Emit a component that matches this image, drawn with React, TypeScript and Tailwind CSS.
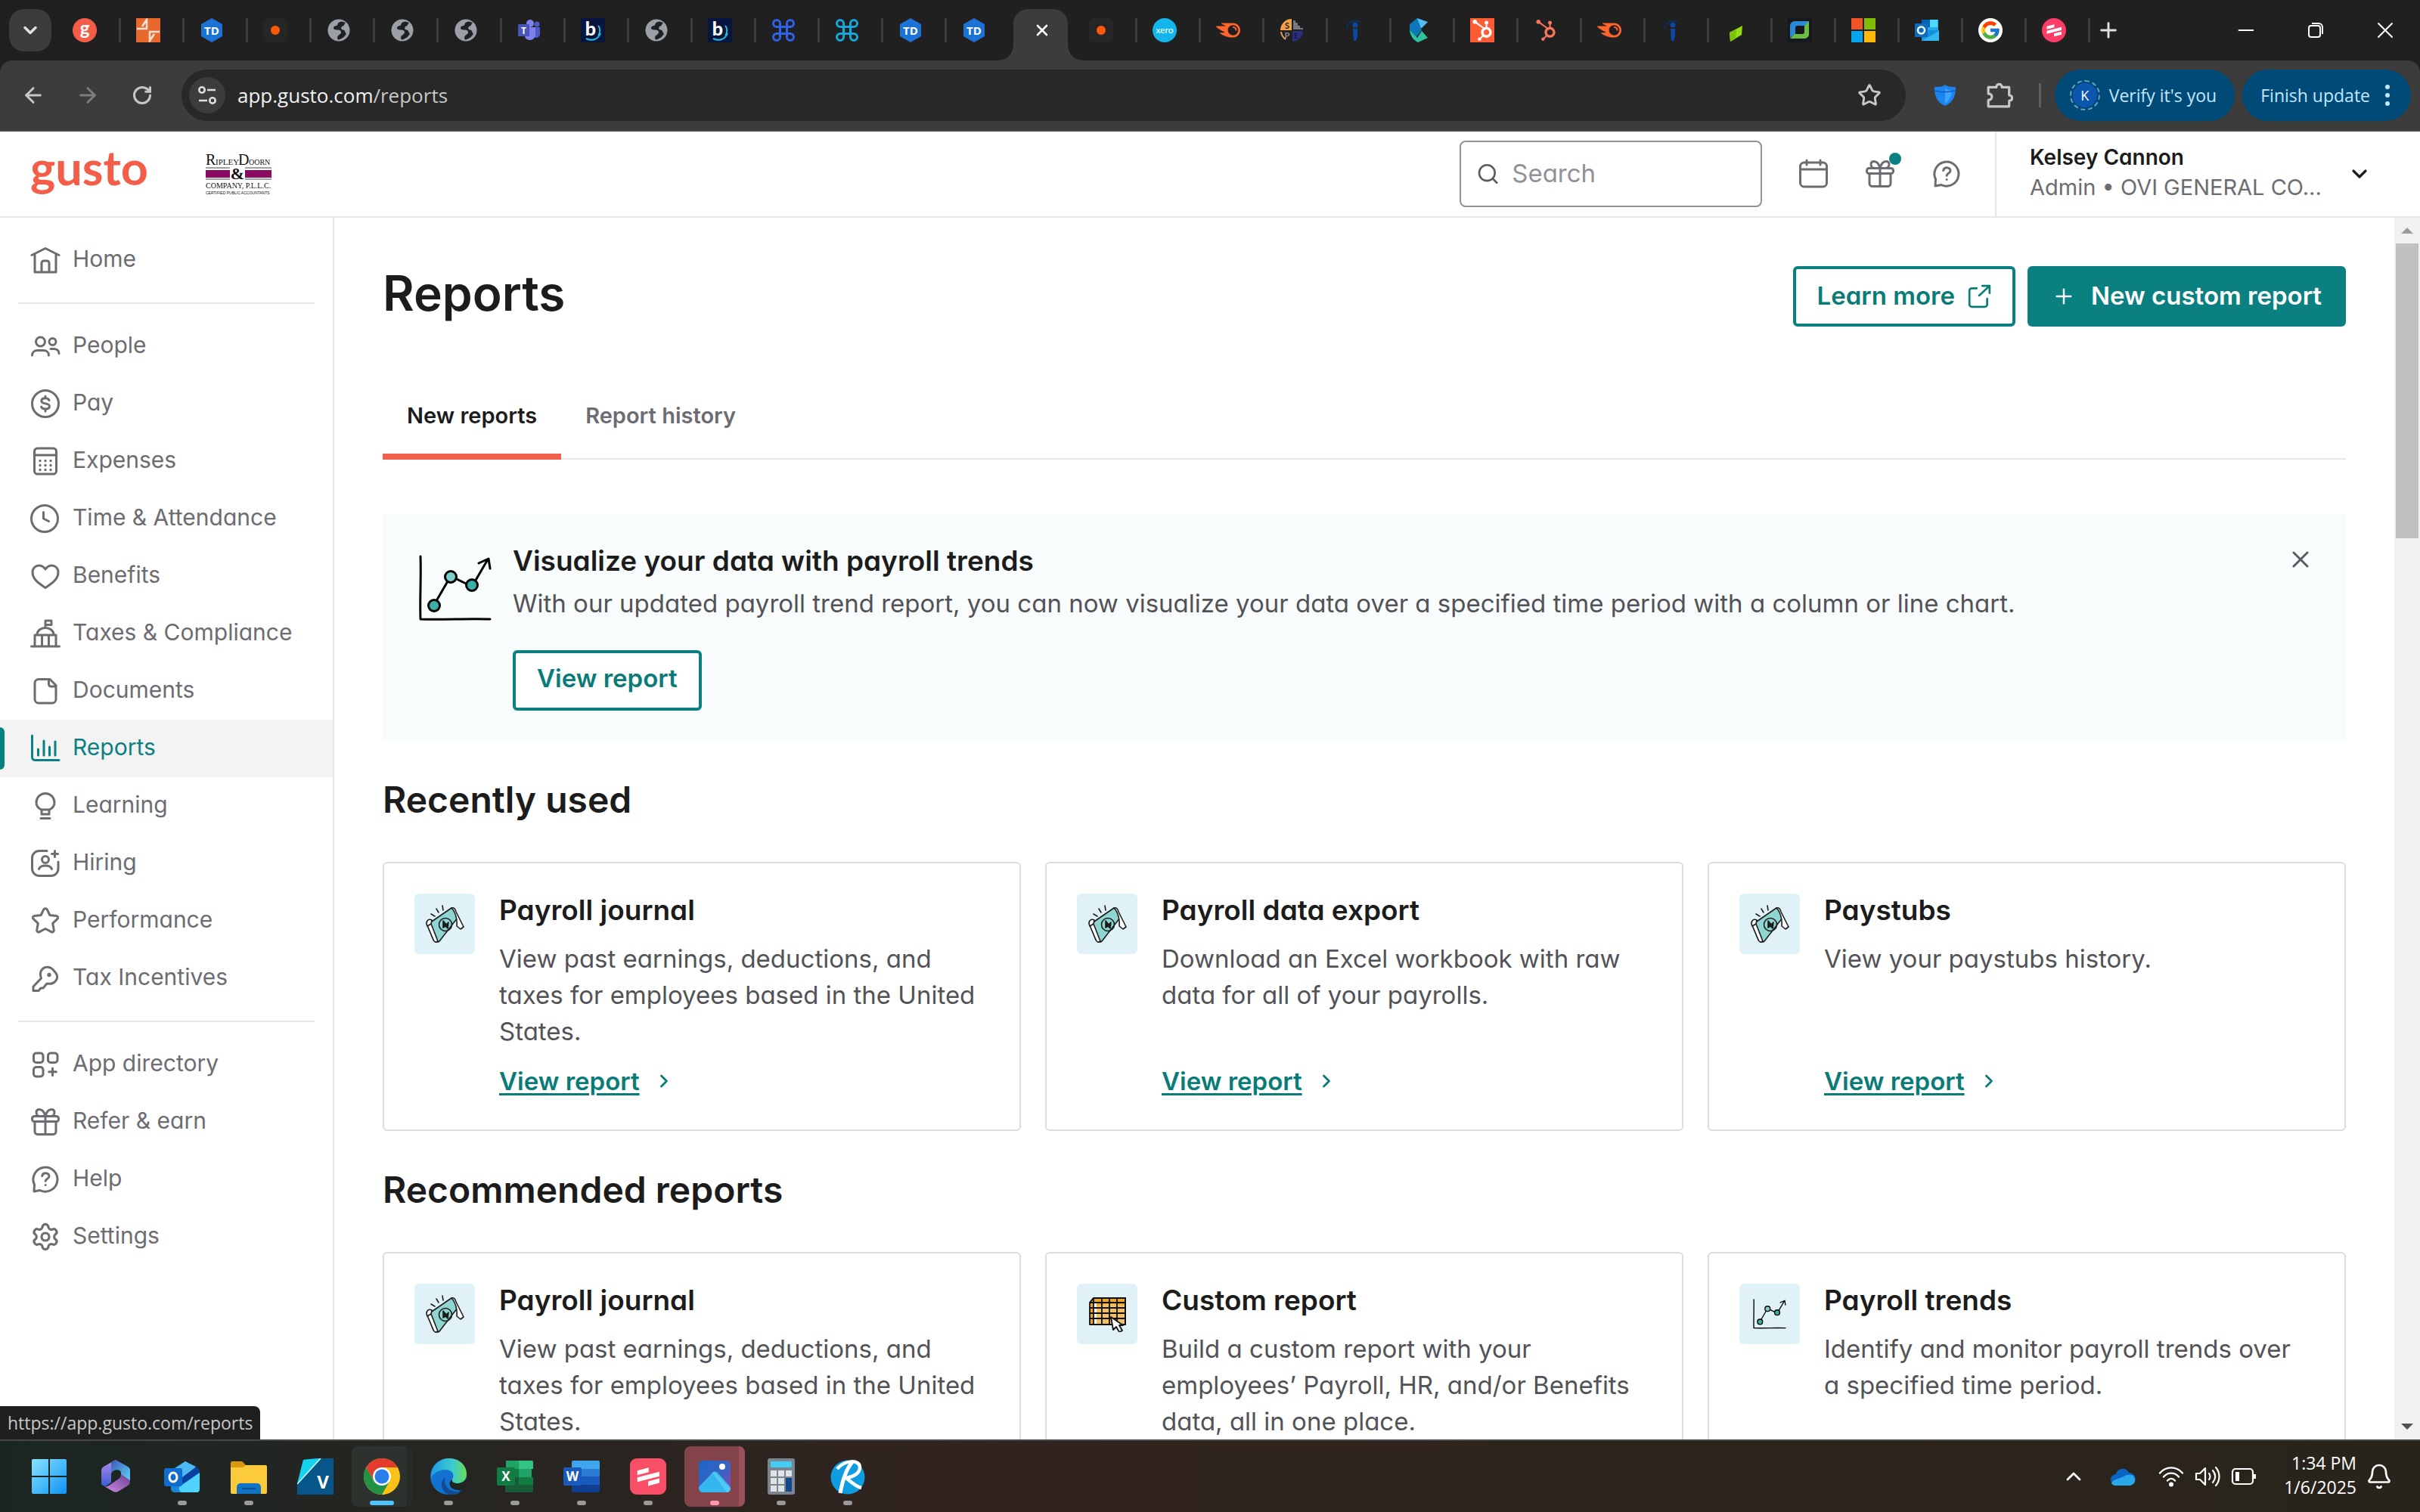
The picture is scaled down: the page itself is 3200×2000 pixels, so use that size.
import React from 'react';
import {
  ArrowLeft,
  ArrowRight,
  Bell,
  ChevronDown,
  ChevronRight,
  ChevronUp,
  Command,
  Minus,
  Plus,
  RotateCw,
  Search,
  Settings,
  Star,
  X,
} from 'lucide-react';
import { FaHubspot } from 'react-icons/fa';
import { FcGoogle } from 'react-icons/fc';
import { SiSemrush } from 'react-icons/si';
import { clsx } from 'clsx';

/* ---------- tab favicons ---------- */

function GustoFavicon() {
  return (
    <svg viewBox="0 0 32 32" className="size-8 overflow-visible">
      <circle cx="16" cy="16" r="16" fill="#f45d48" />
      <text x="16" y="22" textAnchor="middle" fontSize="24" fontWeight="700" fontFamily="Lato, sans-serif" fill="#fff">g</text>
    </svg>
  );
}

function ArrowsFavicon() {
  return (
    <svg viewBox="0 0 32 32" className="size-8">
      <rect width="32" height="32" fill="#e8692d" />
      <path d="M1 14h13V2L8 11M31 18H18v12l6-9" fill="none" stroke="#fbe3d5" strokeWidth="2.500" />
    </svg>
  );
}

function TdFavicon() {
  return (
    <svg viewBox="0 0 32 32" className="size-8">
      <path d="m16 0 14 8v16l-14 8-14-8V8z" fill="#1a73d4" />
      <text x="16" y="21.500" textAnchor="middle" fontSize="15" fontWeight="700" fontFamily="Open Sans, sans-serif" fill="#fff">TD</text>
    </svg>
  );
}

function DotFavicon() {
  return (
    <svg viewBox="0 0 32 32" className="size-8">
      <rect width="32" height="32" rx="6" fill="#262626" />
      <circle cx="16" cy="16" r="6" fill="#fc5a08" />
    </svg>
  );
}

function GlobeFavicon() {
  return (
    <svg viewBox="0 0 32 32" className="size-8">
      <circle cx="16" cy="16" r="14.500" fill="#9aa0a6" />
      <path
        d="M19 4.500c-3 1-5 2-5 5-2 1-4 .5-5 3 0 3 3 3 6 3 3 .5 4 1 4 4-2 3-5 3-5 7l1 2c5-.5 9-4 11-8-2-1-1-4-4-5-3 0-4-3-1-5 3-.5 2-4 4-4-1-1-3-2-6-2z"
        fill="#202124"
      />
    </svg>
  );
}

function TeamsFavicon() {
  return (
    <svg viewBox="0 0 32 32" className="size-8">
      <circle cx="17" cy="7" r="5" fill="#7b83eb" />
      <circle cx="26" cy="8" r="3.500" fill="#5059c9" />
      <path d="M22 12h8v9a5 5 0 0 1-8 4z" fill="#5059c9" />
      <path d="M10 12h14v11a7.500 7.500 0 0 1-14 2z" fill="#7b83eb" />
      <rect x="1" y="8" width="15" height="16" rx="1.500" fill="#4b53bc" />
      <text x="8.500" y="20.500" textAnchor="middle" fontSize="12" fontWeight="700" fontFamily="Open Sans, sans-serif" fill="#fff">T</text>
    </svg>
  );
}

function BFavicon() {
  return (
    <svg viewBox="0 0 32 32" className="size-8 overflow-visible">
      <rect width="32" height="32" fill="#06163f" />
      <path d="M7 27c8 4 16 1 19-7M23 10c3 3 3 9 0 13" fill="none" stroke="#28bcd8" strokeWidth="2" />
      <text x="13" y="23" textAnchor="middle" fontSize="25" fontWeight="900" fontFamily="Lato, sans-serif" fill="#fff">b</text>
    </svg>
  );
}

function XeroFavicon() {
  return (
    <svg viewBox="0 0 32 32" className="size-8">
      <circle cx="16" cy="16" r="16" fill="#13b5ea" />
      <text x="16" y="20" textAnchor="middle" fontSize="12" fontFamily="Lato, sans-serif" fill="#fff">xero</text>
    </svg>
  );
}

function SpeFavicon() {
  return (
    <svg viewBox="0 0 32 32" className="size-8">
      <path d="M16 1A15 15 0 0 0 1 16h15z" fill="#f0a04b" />
      <path d="M2 18a14 14 0 0 0 6 10" fill="none" stroke="#f0a04b" strokeWidth="2" />
      <path d="M18 15V3h3v3h3v4h3v3h4v2z" fill="#77787c" />
      <path d="M17 17h14a15 15 0 0 1-14 14z" fill="#2c2f80" />
      <text x="10" y="14" textAnchor="middle" fontSize="11" fontWeight="700" fontFamily="Lato, sans-serif" fill="#202020">S</text>
      <text x="10" y="27" textAnchor="middle" fontSize="11" fontWeight="700" fontFamily="Lato, sans-serif" fill="#8d8e92">P</text>
      <text x="22" y="27" textAnchor="middle" fontSize="10" fontWeight="700" fontFamily="Lato, sans-serif" fill="#15163f">E</text>
    </svg>
  );
}

function InfoFavicon() {
  return (
    <svg viewBox="0 0 32 32" className="size-8">
      <path d="M5 14c1-8 8-13 18-9" fill="none" stroke="#0d2f6b" strokeWidth="1.500" />
      <circle cx="16" cy="9" r="3.500" fill="#0b47a6" />
      <path d="M13 14h6v10l-2 6h-3z" fill="#0b47a6" />
    </svg>
  );
}

function FoldFavicon() {
  return (
    <svg viewBox="0 0 32 32" className="size-8">
      <path d="M14 0 28 5l-8 8-10 2z" fill="#54bdf0" />
      <path d="m14 0-10 8v10l8 8 8-10z" fill="#0d76b8" />
      <path d="M4 16c1 8 5 13 11 16l13-6-8-9-6 9z" fill="#2cc29c" />
    </svg>
  );
}

function HubspotTile() {
  return (
    <span className="flex size-8 items-center justify-center bg-[#ff5c35]">
      <FaHubspot className="size-7 text-white" />
    </span>
  );
}

function LeafFavicon() {
  return (
    <svg viewBox="0 0 32 32" className="size-8">
      <path d="m7 19 17-9-1 12-15 9z" fill="#96dc10" />
      <path d="m7 19 9-4-1 12-7 4z" fill="#7cc40a" />
    </svg>
  );
}

function RingFavicon() {
  return (
    <svg viewBox="0 0 32 32" className="size-8">
      <rect width="32" height="32" fill="#161a1e" />
      <path d="M3 26V11c0-5 3-7 7-7h18l-4 6H13c-2 0-3 1-3 3v8z" fill="#2b8ad6" />
      <path d="M28 4v17c0 4-3 6-7 6H3l6-6h10c2 0 3-1 3-3v-8z" fill="#6dbb45" />
    </svg>
  );
}

function MicrosoftFavicon() {
  return (
    <svg viewBox="0 0 32 32" className="size-8">
      <path d="M0 0h15v15H0z" fill="#f35325" />
      <path d="M17 0h15v15H17z" fill="#81bc06" />
      <path d="M0 17h15v15H0z" fill="#05a6f0" />
      <path d="M17 17h15v15H17z" fill="#ffba08" />
    </svg>
  );
}

function OutlookFavicon() {
  return (
    <svg viewBox="0 0 32 32" className="size-8">
      <path d="M9 2h22v14H9z" fill="#28a8ea" />
      <path d="M9 2h11v10H9z" fill="#0364b8" />
      <path d="M20 2h10v10H20z" fill="#50d9ff" />
      <path d="M9 16h23v14H9z" fill="#1490df" />
      <path d="m9 30 23-13v13z" fill="#35b8f1" />
      <rect y="7" width="17" height="18" rx="1.500" fill="#0f6cbd" />
      <circle cx="8.500" cy="16" r="4.500" fill="none" stroke="#fff" strokeWidth="2.500" />
    </svg>
  );
}

function GoogleFavicon() {
  return (
    <span className="flex size-8 items-center justify-center rounded-full bg-white">
      <FcGoogle className="size-7" />
    </span>
  );
}

function BarsFavicon() {
  return (
    <svg viewBox="0 0 32 32" className="size-8">
      <circle cx="16" cy="16" r="16" fill="#fb3c66" />
      <BarsGlyph />
    </svg>
  );
}

function BarsGlyph() {
  return (
    <g fill="#fff">
      <path d="m6.500 10.800 10-2.600v4l-10 2.600z" />
      <path d="M6.500 16.800 26 11.800v4L6.500 20.800z" />
      <path d="m16 20.300 10-2.600v4l-10 2.600z" />
    </g>
  );
}

/* ---------- sidebar icons, all on a 40 unit grid ---------- */

function Glyph({ children }: { children: React.ReactNode }) {
  return (
    <svg
      viewBox="0 0 40 40"
      className="size-10 shrink-0"
      fill="none"
      stroke="currentColor"
      strokeWidth="3"
      strokeLinecap="round"
      strokeLinejoin="round"
    >
      {children}
    </svg>
  );
}

const HomeIcon = () => (
  <Glyph>
    <path d="M2 13.500 20 4.500l18 9M6 12v24h28V12M15 36V24a3 3 0 0 1 3-3h4a3 3 0 0 1 3 3v12" />
  </Glyph>
);

const PeopleIcon = () => (
  <Glyph>
    <circle cx="13.500" cy="14" r="6" />
    <circle cx="29.500" cy="14" r="4.500" />
    <path d="M2.500 32c0-4 3-6.500 7-6.500h8c4 0 7 2.500 7 6.500M27 23.500h4c4 0 7 2 7 6" />
  </Glyph>
);

const PayIcon = () => (
  <Glyph>
    <circle cx="20" cy="20" r="17.500" />
    <path d="M25 15.500c-.8-2-2.800-2.700-5-2.700-3 0-5.200 1.200-5.200 3.500 0 5.200 10.600 2 10.600 7 0 2.600-2.600 3.800-5.400 3.800-2.600 0-4.700-1-5.400-3M20 10v2.500M20 27.500V30" />
  </Glyph>
);

const ExpensesIcon = () => (
  <Glyph>
    <rect x="5.500" y="3" width="29" height="34" rx="4" />
    <path d="M5.500 12h29" />
    <path d="M13 19.500h.01M20 19.500h.01M27 19.500h.01M13 25.500h.01M20 25.500h.01M27 25.500h.01M13 31.500h.01M20 31.500h.01M27 31.500h.01" strokeWidth="3.500" />
  </Glyph>
);

const ClockIcon = () => (
  <Glyph>
    <circle cx="19" cy="20" r="17.500" />
    <path d="M17.500 11.500v8.500l7 3.500" />
  </Glyph>
);

const HeartIcon = () => (
  <Glyph>
    <path d="M20 35.500C12 30 3 24.500 3 15c0-5.500 4-9 8.500-9 3.500 0 6.500 2 8.500 5 2-3 5-5 8.500-5C33 6 37 9.500 37 15c0 9.500-9 15-17 20.500z" />
  </Glyph>
);

const TaxesIcon = () => (
  <Glyph>
    <path d="M1.500 37h37M6 37V22h28v15M15.500 22v15M24.500 22v15M9 22c0-6 5-9.500 11-9.500S31 16 31 22M20 12V3h8v5.500h-8" />
  </Glyph>
);

const DocumentIcon = () => (
  <Glyph>
    <path d="M26 4.500H11a5 5 0 0 0-5 5V31a5 5 0 0 0 5 5h18a5 5 0 0 0 5-5V12.500zM24.500 5v6a3 3 0 0 0 3 3H34" />
  </Glyph>
);

const ReportsIcon = () => (
  <Glyph>
    <path d="M2.500 3v28.500a4 4 0 0 0 4 4H38M10.500 21v8M18 10v19M25.500 18v11M33 11v18" />
  </Glyph>
);

const BulbIcon = () => (
  <Glyph>
    <path d="M14.500 25c-4-2-6.500-5-6.500-9.500a12 12 0 0 1 24 0c0 4.500-2.500 7.500-6.500 9.500zM15 25v6h10v-6M14 36.500h12" />
  </Glyph>
);

const HiringIcon = () => (
  <Glyph>
    <path d="M22 3.500H12A9.500 9.500 0 0 0 2.500 13v14a9.500 9.500 0 0 0 9.500 9.500h15.500A9.500 9.500 0 0 0 37 27v-9M32.500 3.500v8M28.500 7.500h8M11.500 27.500c1-3 4-4.500 8.500-4.500s7.500 1.500 8.500 4.500" />
    <circle cx="20" cy="15" r="4.500" />
  </Glyph>
);

const PerformanceIcon = () => (
  <Glyph>
    <path d="M17.600 5.200a2.700 2.700 0 0 1 4.800 0l3.400 7.300 8.800 1.100a2.200 2.200 0 0 1 1.300 3.800l-6.200 6 1.600 8.800a2.300 2.300 0 0 1-3.400 2.400L20 30.500l-7.900 4.100a2.300 2.300 0 0 1-3.400-2.400l1.600-8.800-6.200-6a2.200 2.200 0 0 1 1.300-3.800l8.800-1.100z" />
  </Glyph>
);

const KeyIcon = () => (
  <Glyph>
    <path d="M14.500 20 4 31v5.500h7l3-3.500h3l5-6c5 1 9 0 12-4 2.500-3.500 2-7.500-1-11l-3.500-4c-3-3-9-4-12.500-1s-4.500 8-2.500 13z" />
    <circle cx="25" cy="15.500" r="1.200" />
  </Glyph>
);

const AppsIcon = () => (
  <Glyph>
    <rect x="4.500" y="5" width="12.500" height="12.500" rx="3.500" />
    <rect x="23.500" y="5" width="12.500" height="12.500" rx="3.500" />
    <rect x="4.500" y="23.500" width="12.500" height="12.500" rx="3.500" />
    <path d="M29.500 25v9.500M24.700 29.800h9.600" />
  </Glyph>
);

const GiftIcon = () => (
  <Glyph>
    <rect x="2.500" y="12.500" width="35" height="7" rx="3" />
    <path d="M6 19.500v13a4 4 0 0 0 4 4h20a4 4 0 0 0 4-4v-13M20 12.500v24M20 12.500c-1.500-6-4.500-9-8-9-2.500 0-4 1.500-4 4 0 3 2 5 5 5M20 12.500c1.500-6 4.500-9 8-9 2.500 0 4 1.500 4 4 0 3-2 5-5 5" />
  </Glyph>
);

const HelpIcon = () => (
  <Glyph>
    <path d="M5 36l.5-9A16 16 0 1 1 13 34.500z" />
    <path d="M15.700 15.500c.5-2.500 2.300-3.800 4.500-3.800 2.800 0 4.800 1.800 4.800 4.200 0 3.300-4.800 3.300-4.800 6.300M20.200 27.500h.01" />
  </Glyph>
);

const CalendarIcon = () => (
  <Glyph>
    <rect x="2.500" y="5" width="35" height="32" rx="5" />
    <path d="M2.500 14h35M11 2v6M29 2v6" />
  </Glyph>
);

const SettingsIcon = () => <Settings className="size-10 shrink-0" strokeWidth={1.9} />;

/* ---------- report illustrations ---------- */

function TrendArt({ className }: { className: string }) {
  return (
    <svg viewBox="0 0 96 88" className={className} fill="none" stroke="#000" strokeWidth="3" strokeLinecap="round" strokeLinejoin="round">
      <path d="M2 2c1 28-1 56 0 83 30 1 62-1 92 0" />
      <path d="m20 66 22-38 28 14L91 6M79 11l13-6 2 13" />
      <circle cx="20" cy="67" r="7.500" fill="#3bb0a6" />
      <circle cx="42" cy="29" r="7.500" fill="#7cd0ca" />
      <circle cx="70" cy="40" r="7.500" fill="#3bb0a6" />
    </svg>
  );
}

function CashArt() {
  return (
    <svg viewBox="0 0 52 52" className="size-13" fill="none" stroke="#1c1c1c" strokeWidth="1.600" strokeLinejoin="round" strokeLinecap="round">
      <path d="M3 27 35 5c4 1 6 7 8 13L19 49c-3 2-6 1-8-2z" fill="#8fd6d2" />
      <path d="m3 28 5-2 9 23c-3 2-5 1-6-2z" fill="#fff" />
      <path d="M2 26c0-5 3-7 7-5l-1 5-5 3z" fill="#fff" />
      <path d="M35 5c3-1 5 1 6 5l10 20-4 3-5-4c1-9-2-19-7-24z" fill="#fff" />
      <circle cx="27" cy="27" r="8.500" />
      <path d="m24 22 4 5 3-3-1 8-3-3-3 2z" fill="#1c1c1c" />
      <path d="m18 11-3-5M24 8l-1-6M13 16l-5-3" />
    </svg>
  );
}

function TableArt() {
  return (
    <svg viewBox="0 0 52 48" className="h-12 w-13" stroke="#111" strokeWidth="1.800" strokeLinejoin="round">
      <path d="M3 9 8 3h42v35H3z" fill="#e9a62c" />
      <path d="M12 14c12-5 26-3 37-1v24H12z" fill="#f2c069" stroke="none" />
      <path d="M8 10h4v27H8z" fill="#fff" stroke="none" />
      <path d="M3 9 8 3v35M3 9h47M3 16h47M3 23h47M3 30h47M3 38h47V3H8M19 3v35M29 3v35M39 3v35" fill="none" />
      <path d="m31 28 3 17 4-4 4 7 4-2-4-7h5z" fill="#fff" />
    </svg>
  );
}

/* ---------- taskbar icons ---------- */

function StartLogo() {
  return (
    <svg viewBox="0 0 48 48" className="size-12">
      <defs>
        <linearGradient id="start" x1="0" y1="0" x2="1" y2="1">
          <stop offset="0" stopColor="#8be3ff" />
          <stop offset="1" stopColor="#0d93f5" />
        </linearGradient>
      </defs>
      <path d="M3 1h20v22H1V3a2 2 0 0 1 2-2zM25 1h20a2 2 0 0 1 2 2v20H25zM1 25h22v22H3a2 2 0 0 1-2-2zM25 25h22v20a2 2 0 0 1-2 2H25z" fill="url(#start)" />
    </svg>
  );
}

function CopilotLogo() {
  return (
    <svg viewBox="0 0 48 48" className="size-12">
      <defs>
        <linearGradient id="m365a" x1="0" y1="0" x2="0" y2="1">
          <stop offset="0" stopColor="#b48be8" />
          <stop offset="1" stopColor="#3b5fd9" />
        </linearGradient>
        <linearGradient id="m365b" x1="0" y1="0" x2="1" y2="1">
          <stop offset="0" stopColor="#3c57b5" />
          <stop offset="1" stopColor="#5fd6fb" />
        </linearGradient>
        <linearGradient id="m365c" x1="0" y1="1" x2="1" y2="0">
          <stop offset="0" stopColor="#d08bea" />
          <stop offset="1" stopColor="#6a3f8e" />
        </linearGradient>
      </defs>
      <path d="M24 2 8 11c-2 1-3 3-3 5v17c0 2 4 5 7 3l6-4V19c0-3 1-5 3-6l6-5z" fill="url(#m365a)" />
      <path d="m24 2 16 9c2 1 3 3 3 5v14L31 22v-3c0-4-9-6-13 1V5z" fill="url(#m365b)" />
      <path d="M43 29c0 4-1 6-3 7l-13 8c-2 1-4 1-6 0L9 37c4 1 6-1 9-3l10-7c2-1 3-3 3-6z" fill="url(#m365c)" />
    </svg>
  );
}

function OutlookLogo() {
  return (
    <svg viewBox="0 0 48 48" className="size-12">
      <path d="M28 4 46 16v24c0 3-2 5-5 5H14c-3 0-5-2-5-5V16z" fill="#1a86d8" />
      <path d="M28 4 10 16v6l12 6L42 11z" fill="#4cb9f1" />
      <path d="m24 25 19-14 4 5v3L24 34z" fill="#0b3f9e" />
      <path d="m47 19-27 19c-1 4 1 7 4 7h19c3 0 4-2 4-5z" fill="#4fd3fa" />
      <rect y="13" width="24" height="24" rx="3" fill="#0f6cd0" />
      <ellipse cx="12" cy="25" rx="5" ry="6" fill="none" stroke="#fff" strokeWidth="3" />
    </svg>
  );
}

function FolderLogo() {
  return (
    <svg viewBox="0 0 48 48" className="size-12">
      <path d="M2 4h13l5 5v6H0V6a2 2 0 0 1 2-2z" fill="#d99a0b" />
      <path d="M0 12h16l4-3h26a2 2 0 0 1 2 2v34a2 2 0 0 1-2 2H2a2 2 0 0 1-2-2z" fill="#fccb3b" />
      <path d="M8 47V38a5 5 0 0 1 5-5h22a5 5 0 0 1 5 5v9z" fill="#1173c4" />
      <path d="M15 40h18" stroke="#0a4f8e" strokeWidth="2" />
    </svg>
  );
}

function VLogo() {
  return (
    <svg viewBox="0 0 48 48" className="size-12">
      <path d="M8 2C20 0 34 0 48 0v48H0V32z" fill="#07568a" />
      <path d="M8 2C16 1 24 0 31 0L0 34z" fill="#15d2ee" />
      <path d="M31 0 0 34" stroke="#d9fbff" strokeWidth="1.500" />
      <text x="34" y="40" textAnchor="middle" fontSize="24" fontWeight="700" fontFamily="Open Sans, sans-serif" fill="#fff">V</text>
    </svg>
  );
}

function ChromeLogo() {
  return (
    <svg viewBox="0 0 48 48" className="size-12">
      <circle cx="24" cy="24" r="24" fill="#fbc116" />
      <path d="M3.200 12A24 24 0 0 1 44.800 12H24L13.600 30z" fill="#e33b2e" />
      <path d="M3.200 12A24 24 0 0 0 24 48L34.400 30 24 36 13.600 30z" fill="#229342" />
      <circle cx="24" cy="24" r="12" fill="#fff" />
      <circle cx="24" cy="24" r="9.500" fill="#2b7de9" />
    </svg>
  );
}

function EdgeLogo() {
  return (
    <svg viewBox="0 0 48 48" className="size-12">
      <defs>
        <linearGradient id="edge" x1="0" y1="0" x2="1" y2="0">
          <stop offset="0" stopColor="#1f9be0" />
          <stop offset=".6" stopColor="#3ccbd0" />
          <stop offset="1" stopColor="#6bdc55" />
        </linearGradient>
      </defs>
      <circle cx="24" cy="24" r="24" fill="#1173cf" />
      <path d="M1 20C4 7 14 0 25 0c14 0 23 10 23 20 0 8-5 13-12 13-5 0-8-2-7-5 4-6 0-13-9-13C10 15 4 20 1 26z" fill="url(#edge)" />
      <path d="M20 24c-4 10 4 20 15 20 4 0 6-1 9-3-5 6-12 8-20 7-8-4-14-14-4-24z" fill="#134a94" />
      <path d="M29 28c-1 3 2 5 7 5 5 0 9-2 12-7 0 7-2 11-4 14-3 2-8 3-13 1-6-3-8-10-2-13z" fill="#1f2421" />
    </svg>
  );
}

function ExcelLogo() {
  return (
    <svg viewBox="0 0 48 48" className="size-12">
      <path d="M12 3h34v42H12z" fill="#21a366" />
      <path d="M29 3h17a2 2 0 0 1 2 2v9H29z" fill="#33c481" />
      <path d="M11 14h18v11H11zM29 25h19v10H29z" fill="#107c41" />
      <path d="M11 25h18v10H11zM11 35h37v8a2 2 0 0 1-2 2H13a2 2 0 0 1-2-2z" fill="#185c37" />
      <rect y="12" width="24" height="24" rx="2" fill="#107c41" />
      <text x="12" y="30" textAnchor="middle" fontSize="17" fontWeight="700" fontFamily="Open Sans, sans-serif" fill="#fff">X</text>
    </svg>
  );
}

function WordLogo() {
  return (
    <svg viewBox="0 0 48 48" className="size-12">
      <path d="M11 5a2 2 0 0 1 2-2h33a2 2 0 0 1 2 2v9H11z" fill="#41a5ee" />
      <path d="M11 14h37v10H11z" fill="#2b7cd3" />
      <path d="M11 24h37v11H11z" fill="#185abd" />
      <path d="M11 35h37v8a2 2 0 0 1-2 2H13a2 2 0 0 1-2-2z" fill="#103f91" />
      <rect y="12" width="24" height="24" rx="2" fill="#185abd" />
      <text x="12" y="30" textAnchor="middle" fontSize="17" fontWeight="700" fontFamily="Open Sans, sans-serif" fill="#fff">W</text>
    </svg>
  );
}

function BarsLogo() {
  return (
    <svg viewBox="0 0 32 32" className="size-12">
      <rect width="32" height="32" rx="6" fill="#f94f66" />
      <BarsGlyph />
    </svg>
  );
}

function PhotosLogo() {
  return (
    <svg viewBox="0 0 48 48" className="size-12">
      <defs>
        <linearGradient id="photos" x1="0" y1="0" x2="1" y2="1">
          <stop offset="0" stopColor="#1a66c9" />
          <stop offset=".6" stopColor="#3c62c0" />
          <stop offset="1" stopColor="#a03bb0" />
        </linearGradient>
      </defs>
      <rect x="3" y="3" width="42" height="42" rx="5" fill="url(#photos)" />
      <path d="M3 38 21 19c2-2 5-2 7 0l17 19c0 5-2 7-5 7H8c-3 0-5-2-5-7z" fill="#35b6ee" />
      <path d="m21 19 3-1 21 22c0 3-2 5-5 5z" fill="#6fdcf7" opacity=".5" />
      <circle cx="34" cy="11" r="4" fill="#fff" />
    </svg>
  );
}

function CalculatorLogo() {
  return (
    <svg viewBox="0 0 48 48" className="size-12">
      <rect x="6" y="0" width="36" height="48" rx="3" fill="#7a858f" />
      <rect x="10" y="4" width="28" height="8" rx="1" fill="#43cdf2" />
      <path d="M10 16h8v8h-8zM20 16h8v8h-8zM30 16h8v8h-8zM10 26h8v8h-8zM20 26h8v8h-8zM10 36h8v8h-8zM20 36h8v8h-8z" fill="#dfe3e6" />
      <path d="M30 26h8v18h-8z" fill="#104a8e" />
    </svg>
  );
}

function RevuLogo() {
  return (
    <svg viewBox="0 0 48 48" className="size-12" fill="none">
      <circle cx="24" cy="25" r="22.500" fill="#0e9de0" />
      <path d="M14 46C17 30 22 14 30 5" stroke="#fff" strokeWidth="5" />
      <path d="M10 14C20 2 40 1 40 12c0 9-11 13-18 14 5 4 12 11 20 13" stroke="#fff" strokeWidth="4.500" />
    </svg>
  );
}

/* ---------- browser window ---------- */

const leftTabs = [
  GustoFavicon,
  ArrowsFavicon,
  TdFavicon,
  DotFavicon,
  GlobeFavicon,
  GlobeFavicon,
  GlobeFavicon,
  TeamsFavicon,
  BFavicon,
  GlobeFavicon,
  BFavicon,
  () => <Command className="size-9 text-[#2f62e6]" strokeWidth={2} />,
  () => <Command className="size-9 text-[#16a6dc]" strokeWidth={2} />,
  TdFavicon,
  TdFavicon,
];

const rightTabs = [
  DotFavicon,
  XeroFavicon,
  () => <SiSemrush className="size-8 text-[#ff642d]" />,
  SpeFavicon,
  InfoFavicon,
  FoldFavicon,
  HubspotTile,
  () => <FaHubspot className="size-7 text-[#f8765c]" />,
  () => <SiSemrush className="size-8 text-[#ff642d]" />,
  InfoFavicon,
  LeafFavicon,
  RingFavicon,
  MicrosoftFavicon,
  OutlookFavicon,
  GoogleFavicon,
  BarsFavicon,
];

function Tab({ icon: Icon, last }: { icon: React.ComponentType; last?: boolean }) {
  return (
    <div className="flex h-full w-[84px] items-center">
      <span className="flex w-[72px] justify-center">
        <Icon />
      </span>
      {!last && <span className="ml-auto h-8 w-[3px] bg-[#3c3c3c]" />}
    </div>
  );
}

function TabStrip() {
  return (
    <div className="flex h-20 shrink-0 items-center bg-[#202020] pl-3 text-[#dfdfdf]">
      <button aria-label="Search tabs" className="mr-2 flex size-14 items-center justify-center rounded-[20px] bg-[#3c3c3c]">
        <ChevronDown className="size-7" strokeWidth={3} />
      </button>
      {leftTabs.map((icon, i) => (
        <Tab key={i} icon={icon} last={i === leftTabs.length - 1} />
      ))}
      <div className="relative flex h-full w-[84px] items-center">
        <svg viewBox="0 0 120 68" className="absolute bottom-0 -left-5 h-[68px] w-[120px]">
          <path d="M0 68c16 0 24-8 24-24V20C24 8 32 0 44 0h32c12 0 20 8 20 20v24c0 16 8 24 24 24z" fill="#3c3c3c" />
        </svg>
        <button aria-label="Close tab" className="relative flex w-[88px] justify-center text-white">
          <X className="size-6" strokeWidth={2.6} />
        </button>
      </div>
      {rightTabs.map((icon, i) => (
        <Tab key={i} icon={icon} />
      ))}
      <button aria-label="New tab" className="flex w-12 justify-center">
        <Plus className="size-8" strokeWidth={2.2} />
      </button>
      <div className="ml-auto flex items-center text-white">
        <button aria-label="Minimize" className="flex w-[92px] justify-center">
          <Minus className="size-8" strokeWidth={1.6} />
        </button>
        <button aria-label="Restore" className="flex w-[92px] justify-center">
          <svg viewBox="0 0 20 20" className="size-5" fill="none" stroke="currentColor" strokeWidth="2">
            <rect x="1" y="4" width="15" height="15" rx="3" />
            <path d="M5 1h9a5 5 0 0 1 5 5v9" />
          </svg>
        </button>
        <button aria-label="Close" className="flex w-[92px] justify-center">
          <X className="size-9" strokeWidth={1.3} />
        </button>
      </div>
    </div>
  );
}

function Toolbar() {
  return (
    <div className="shrink-0 bg-[#202020]">
      <div className="flex h-[94px] items-center rounded-t-2xl border-b-2 border-[#4a4a4a] bg-[#3c3c3c] pr-3 pl-2 font-['Open_Sans',sans-serif] text-[#c7c7c7]">
        <button aria-label="Back" className="flex w-18 justify-center">
          <ArrowLeft className="size-8" strokeWidth={2.2} />
        </button>
        <button aria-label="Forward" className="flex w-18 justify-center text-[#7d7d7d]">
          <ArrowRight className="size-8" strokeWidth={2.2} />
        </button>
        <button aria-label="Reload" className="flex w-18 justify-center">
          <RotateCw className="size-7" strokeWidth={2.6} />
        </button>
        <div className="ml-4 flex h-[68px] flex-1 items-center rounded-full bg-[#282828] pr-8 pl-[10px]">
          <button aria-label="Site information" className="flex size-12 items-center justify-center rounded-full bg-[#3c3c3c]">
            <svg viewBox="0 0 28 28" className="size-7" fill="none" stroke="#dedede" strokeWidth="2.600">
              <circle cx="7" cy="7" r="3.700" />
              <circle cx="21" cy="21" r="3.700" />
              <path d="M14 7h11M3 21h11" />
            </svg>
          </button>
          <span className="ml-4 text-[26px] text-[#c7c7c7]">
            <span className="text-[#f1f1f1]">app.gusto.com</span>/reports
          </span>
          <button aria-label="Bookmark this tab" className="ml-auto">
            <Star className="size-8" strokeWidth={2.2} />
          </button>
        </div>
        <button aria-label="Password extension" className="ml-4 flex w-18 justify-center">
          <svg viewBox="0 0 28 28" className="size-7">
            <path d="M14 0c4 3 8 3 14 3 0 12-3 20-14 25C3 23 0 15 0 3c6 0 10 0 14-3z" fill="#1a86f0" />
            <path d="M14 5c3 2 6 3 9 3-1 8-3 13-9 17z" fill="#3fa4ff" />
            <path d="M1 8c9 3 17 2 26 0" stroke="#0b5fc0" strokeWidth="1.500" fill="none" />
          </svg>
        </button>
        <button aria-label="Extensions" className="flex w-18 justify-center">
          <svg viewBox="0 0 34 34" className="size-9" fill="none" stroke="currentColor" strokeWidth="3" strokeLinejoin="round">
            <path d="M3 7h10c0-5 7-5 7 0h9v10c5 0 5 7 0 7v7H3v-8c6 0 6-8 0-8z" />
          </svg>
        </button>
        <span className="mr-[18px] ml-4 h-8 w-[3px] bg-[#5f5f5f]" />
        <button className="flex h-[68px] items-center gap-3 rounded-full bg-[#004a77] pr-6 pl-5 text-[23px] text-[#c2e7ff]">
          <span className="flex size-10 items-center justify-center rounded-full border-2 border-dashed border-[#6f9fc0]">
            <span className="flex size-8 items-center justify-center rounded-full bg-[#0b57b0] text-lg text-white">K</span>
          </span>
          Verify it's you
        </button>
        <button className="ml-[10px] flex h-[68px] items-center gap-5 rounded-full bg-[#004a77] pr-7 pl-6 text-[23px] text-[#c2e7ff]">
          Finish update
          <span className="flex flex-col gap-[5px]">
            <span className="size-[6px] rounded-full bg-[#c2e7ff]" />
            <span className="size-[6px] rounded-full bg-[#c2e7ff]" />
            <span className="size-[6px] rounded-full bg-[#c2e7ff]" />
          </span>
        </button>
      </div>
    </div>
  );
}

/* ---------- application ---------- */

function FirmLogo() {
  return (
    <svg viewBox="0 0 88 56" className="h-14 w-[88px] overflow-visible" fontFamily="Liberation Serif, serif" fill="#111">
      <text x="0" y="16" fontSize="20">R</text>
      <text x="13" y="16" fontSize="11">IPLEY</text>
      <text x="43" y="16" fontSize="20">D</text>
      <text x="57" y="16" fontSize="10">OORN</text>
      <path d="M0 20h32M52 20h35M0 35h32M52 35h35" stroke="#444" strokeWidth="1" />
      <path d="M0 23h32v10H0zM52 23h35v10H52z" fill="#8a0a62" />
      <text x="42" y="35" textAnchor="middle" fontSize="22" fontWeight="700">&amp;</text>
      <text x="0" y="47" fontSize="10">COMPANY, P.L.L.C.</text>
      <text x="0" y="55" fontSize="5" fontFamily="Liberation Sans, sans-serif">CERTIFIED PUBLIC ACCOUNTANTS</text>
    </svg>
  );
}

function Header() {
  return (
    <header className="flex h-[114px] shrink-0 items-center border-b-2 border-[#e6e6e7] bg-white pl-10 text-[#6c6c72]">
      <a href="#home" className="pb-5 font-['Lato',sans-serif] text-[63px] leading-none font-bold text-[#f45d48]">gusto</a>
      <span className="ml-[76px]">
        <FirmLogo />
      </span>
      <label className="ml-auto flex h-[88px] w-[400px] items-center gap-4 rounded-lg border-2 border-[#919197] px-5">
        <Search className="size-9 text-[#5b5b60]" strokeWidth={2} />
        <input
          type="text"
          aria-label="Search"
          placeholder="Search"
          className="w-full bg-transparent text-[33px] outline-none placeholder:text-[#919197]"
        />
      </label>
      <button aria-label="Calendar" className="ml-12">
        <CalendarIcon />
      </button>
      <button aria-label="Gifts" className="relative ml-12">
        <GiftIcon />
        <span className="absolute -top-2 -right-2 size-4 rounded-full bg-[#0a8080]" />
      </button>
      <button aria-label="Help" className="ml-12">
        <HelpIcon />
      </button>
      <button className="ml-11 flex h-full w-[562px] items-center border-l-2 border-[#e6e6e7] pl-11 text-left text-[29px] leading-10">
        <span className="pb-1">
          <span className="block text-[28px] font-semibold text-[#1c1c1c]">Kelsey Cannon</span>
          <span className="block">Admin • OVI GENERAL CO...</span>
        </span>
        <ChevronDown className="mr-16 ml-auto size-8 text-[#1c1c1c]" strokeWidth={2.4} />
      </button>
    </header>
  );
}

const navGroups: { name: string; icon: React.ComponentType }[][] = [
  [{ name: 'Home', icon: HomeIcon }],
  [
    { name: 'People', icon: PeopleIcon },
    { name: 'Pay', icon: PayIcon },
    { name: 'Expenses', icon: ExpensesIcon },
    { name: 'Time & Attendance', icon: ClockIcon },
    { name: 'Benefits', icon: HeartIcon },
    { name: 'Taxes & Compliance', icon: TaxesIcon },
    { name: 'Documents', icon: DocumentIcon },
    { name: 'Reports', icon: ReportsIcon },
    { name: 'Learning', icon: BulbIcon },
    { name: 'Hiring', icon: HiringIcon },
    { name: 'Performance', icon: PerformanceIcon },
    { name: 'Tax Incentives', icon: KeyIcon },
  ],
  [
    { name: 'App directory', icon: AppsIcon },
    { name: 'Refer & earn', icon: GiftIcon },
    { name: 'Help', icon: HelpIcon },
    { name: 'Settings', icon: SettingsIcon },
  ],
];

function Sidebar() {
  return (
    <nav className="w-[442px] shrink-0 border-r-2 border-[#e6e6e7] pt-[18px]">
      {navGroups.map((group, g) => (
        <React.Fragment key={g}>
          {g > 0 && <hr className="mx-6 my-[18px] border-t-2 border-[#e6e6e7]" />}
          {group.map(({ name, icon: Icon }) => {
            const active = name === 'Reports';
            return (
              <a
                key={name}
                href="#reports"
                aria-current={active ? 'page' : undefined}
                className={clsx('flex h-[76px] items-center', active ? 'bg-[#f3f3f4] text-[#0a8080]' : 'text-[#6c6c72]')}
              >
                <span className={clsx('mr-[34px] h-14 w-[6px] rounded-r-md', active && 'bg-[#0a8080]')} />
                <Icon />
                <span className="ml-4 pb-1 text-[30px] leading-9">{name}</span>
              </a>
            );
          })}
        </React.Fragment>
      ))}
    </nav>
  );
}

interface Report {
  title: string;
  text: string;
  art: React.ReactNode;
}

const recent: Report[] = [
  {
    title: 'Payroll journal',
    text: 'View past earnings, deductions, and taxes for employees based in the United States.',
    art: <CashArt />,
  },
  {
    title: 'Payroll data export',
    text: 'Download an Excel workbook with raw data for all of your payrolls.',
    art: <CashArt />,
  },
  { title: 'Paystubs', text: 'View your paystubs history.', art: <CashArt /> },
];

const recommended: Report[] = [
  recent[0],
  {
    title: 'Custom report',
    text: 'Build a custom report with your employees’ Payroll, HR, and/or Benefits data, all in one place.',
    art: <TableArt />,
  },
  {
    title: 'Payroll trends',
    text: 'Identify and monitor payroll trends over a specified time period.',
    art: <TrendArt className="h-10 w-11" />,
  },
];

function ReportCard({ title, text, art }: Report) {
  return (
    <article className="flex items-stretch gap-8 rounded-md border-2 border-[#dcdcdd] py-10 pr-12 pl-10">
      <span className="flex size-20 shrink-0 items-center justify-center rounded-md bg-[#e0f2f7]">{art}</span>
      <div className="flex min-w-0 flex-col items-start">
        <h3 className="text-[37px] leading-[44px] font-semibold text-[#1c1c1c]">{title}</h3>
        <p className="mt-[18px] text-[33px] leading-[48px] text-[#525257]">{text}</p>
        <span className="mt-auto flex items-center gap-[18px] pt-[18px] text-[#0a7c78]">
          <a href="#report" className="text-[33px] leading-[48px] font-semibold underline decoration-[3px] underline-offset-4">View report</a>
          <ChevronRight className="size-7" strokeWidth={2.4} />
        </span>
      </div>
    </article>
  );
}

function ReportSection({ title, reports }: { title: string; reports: Report[] }) {
  return (
    <section>
      <h2 className="mt-[50px] mb-[54px] text-[48px] leading-[56px] font-semibold text-[#1c1c1c]">{title}</h2>
      <div className="grid grid-cols-3 gap-8">
        {reports.map((report) => (
          <ReportCard key={report.title} {...report} />
        ))}
      </div>
    </section>
  );
}

function ReportsPage() {
  return (
    <main className="min-w-0 flex-1 px-16 pt-16">
      <div className="flex items-start">
        <h1 className="text-[64px] leading-[72px] font-semibold text-[#1c1c1c]">Reports</h1>
        <a
          href="#learn"
          className="ml-auto flex h-20 items-center gap-4 rounded-md border-4 border-[#0a8080] px-7 text-[33px] font-semibold text-[#0a7c78]"
        >
          Learn more
          <svg viewBox="0 0 30 30" className="size-8" fill="none" stroke="currentColor" strokeWidth="2.500" strokeLinecap="round" strokeLinejoin="round">
            <path d="M12 5H6a3 3 0 0 0-3 3v17a3 3 0 0 0 3 3h16a3 3 0 0 0 3-3v-7M15 14 28 2M19 2h9v9" />
          </svg>
        </a>
        <button className="ml-4 flex h-20 items-center gap-5 rounded-md bg-[#0a8080] px-8 text-[33px] font-semibold text-white">
          <Plus className="size-8" strokeWidth={1.8} />
          New custom report
        </button>
      </div>

      <div role="tablist" className="mt-16 flex h-28 border-b-2 border-[#e6e6e7] text-[29px] font-semibold">
        <button role="tab" aria-selected="true" className="-mb-[2px] border-b-8 border-[#f0604d] px-8 pt-1 text-[#1c1c1c]">
          New reports
        </button>
        <button role="tab" aria-selected="false" className="-mb-[2px] border-b-8 border-transparent px-8 pt-1 text-[#6c6c72]">
          Report history
        </button>
      </div>

      <section className="mt-18 flex bg-[#f8fcfd] py-10 pr-10 pl-12">
        <TrendArt className="mt-[14px] h-[88px] w-24 shrink-0" />
        <div className="ml-7 flex-1">
          <h2 className="text-[37px] leading-[44px] font-semibold text-[#1c1c1c]">Visualize your data with payroll trends</h2>
          <p className="mt-[10px] text-[33px] leading-[48px] text-[#525257]">
            With our updated payroll trend report, you can now visualize your data over a specified time period with a column or line chart.
          </p>
          <button className="mt-[38px] flex h-20 items-center rounded-md border-4 border-[#0a8080] bg-white px-7 pb-1 text-[33px] font-semibold text-[#0a7c78]">
            View report
          </button>
        </div>
        <button aria-label="Dismiss" className="flex size-10 items-center justify-center self-start text-[#5b5b60]">
          <X className="size-9" strokeWidth={2} />
        </button>
      </section>

      <ReportSection title="Recently used" reports={recent} />
      <ReportSection title="Recommended reports" reports={recommended} />
    </main>
  );
}

function Scrollbar() {
  return (
    <div aria-hidden="true" className="flex w-[34px] shrink-0 flex-col items-center bg-[#f1f1f1]">
      <svg viewBox="0 0 34 34" className="size-[34px]">
        <path d="m9 21 8-8 8 8z" fill="#9b9b9b" />
      </svg>
      <span className="h-[390px] w-[30px] bg-[#c1c1c1]" />
      <svg viewBox="0 0 34 34" className="mt-auto size-[34px]">
        <path d="m9 13 8 8 8-8z" fill="#505050" />
      </svg>
    </div>
  );
}

/* ---------- taskbar ---------- */

const pinned: { name: string; icon: React.ComponentType; state?: 'open' | 'focused' | 'alert' }[] = [
  { name: 'Start', icon: StartLogo },
  { name: 'Microsoft 365', icon: CopilotLogo },
  { name: 'Outlook', icon: OutlookLogo, state: 'open' },
  { name: 'File Explorer', icon: FolderLogo, state: 'open' },
  { name: 'Vantage', icon: VLogo },
  { name: 'Chrome', icon: ChromeLogo, state: 'focused' },
  { name: 'Edge', icon: EdgeLogo, state: 'open' },
  { name: 'Excel', icon: ExcelLogo, state: 'open' },
  { name: 'Word', icon: WordLogo, state: 'open' },
  { name: 'Time tracker', icon: BarsLogo, state: 'open' },
  { name: 'Photos', icon: PhotosLogo, state: 'alert' },
  { name: 'Calculator', icon: CalculatorLogo, state: 'open' },
  { name: 'Revu', icon: RevuLogo, state: 'open' },
];

function Taskbar() {
  return (
    <footer className="flex h-24 shrink-0 items-center border-t-2 border-[#464846] bg-linear-to-r from-[#1b2622] via-[#31231f] via-40% to-[#28241b] pl-[21px] font-['Open_Sans',sans-serif] text-white">
      {pinned.map(({ name, icon: Icon, state }) => (
        <button
          key={name}
          aria-label={name}
          className={clsx(
            'relative mx-1 flex size-20 items-center justify-center rounded-lg',
            state === 'focused' && 'border-r-8 border-[#262b28] bg-[#2d322f] pl-2',
            state === 'alert' && 'border-r-8 border-[#99505a] bg-[#83434a] pl-2'
          )}
        >
          <Icon />
          {state && (
            <span
              className={clsx(
                'absolute bottom-[2px] h-[6px] rounded-full',
                state === 'open' && 'w-3 bg-[#9a9a9a]',
                state === 'focused' && 'w-8 bg-[#4cc2ff]',
                state === 'alert' && 'w-3 bg-[#ff9aa8]'
              )}
            />
          )}
        </button>
      ))}
      <div className="ml-auto flex items-center pr-9">
        <ChevronUp className="size-8" strokeWidth={2} />
        <svg viewBox="0 0 34 24" className="ml-8 h-6 w-[34px]">
          <path d="M8 9a9 9 0 0 1 17-2 8 8 0 0 1 1 16H8A7 7 0 0 1 8 9z" fill="#0a64c2" />
          <path d="M2 21c2-5 9-6 14-8 4-3 9-4 13-3 6 3 6 12-2 14H7c-2 0-4-1-5-3z" fill="#28a8ea" />
        </svg>
        <svg viewBox="0 0 34 28" className="ml-[30px] h-7 w-[34px]" fill="none" stroke="currentColor" strokeWidth="2.400" strokeLinecap="round">
          <path d="M2 9.500c8-9.500 22-9.500 30 0M7 14.500c5.500-6.500 14.500-6.500 20 0M12 19.500c3-3.500 7-3.500 10 0" />
          <circle cx="17" cy="24.500" r="1.800" fill="currentColor" />
        </svg>
        <svg viewBox="0 0 34 28" className="ml-[14px] h-7 w-[34px]" fill="none" stroke="currentColor" strokeWidth="2.200" strokeLinecap="round" strokeLinejoin="round">
          <path d="M2 10v8h5l7 7V3L7 10zM19 10c2 2 2 6 0 8M24 6c4 5 4 11 0 16M28 2c6 7 6 17 0 24" />
        </svg>
        <svg viewBox="0 0 34 24" className="ml-[14px] h-6 w-[34px]" fill="none" stroke="currentColor" strokeWidth="2.200">
          <rect x="2" y="2" width="27" height="20" rx="4" />
          <path d="M6 6h5v12H6z" fill="currentColor" stroke="none" />
          <path d="M31 9v6" strokeWidth="4" />
        </svg>
        <div className="ml-6 w-[108px] pb-1 text-right text-[23px] leading-8">
          <div>1:34 PM</div>
          <div>1/6/2025</div>
        </div>
        <Bell className="ml-3 size-9" strokeWidth={1.8} />
      </div>
    </footer>
  );
}

export default function App() {
  return (
    <div className="flex h-screen flex-col overflow-hidden bg-white font-['Inter',sans-serif] [font-feature-settings:'cv11']">
      <TabStrip />
      <Toolbar />
      <Header />
      <div className="relative flex min-h-0 flex-1 overflow-hidden">
        <Sidebar />
        <ReportsPage />
        <Scrollbar />
        <div className="absolute bottom-0 left-0 rounded-tr-lg bg-[#1f1f1f] px-[10px] py-1 font-['Open_Sans',sans-serif] text-[23px] leading-9 text-[#c7c7c7]">
          https://app.gusto.com/reports
        </div>
      </div>
      <Taskbar />
    </div>
  );
}
